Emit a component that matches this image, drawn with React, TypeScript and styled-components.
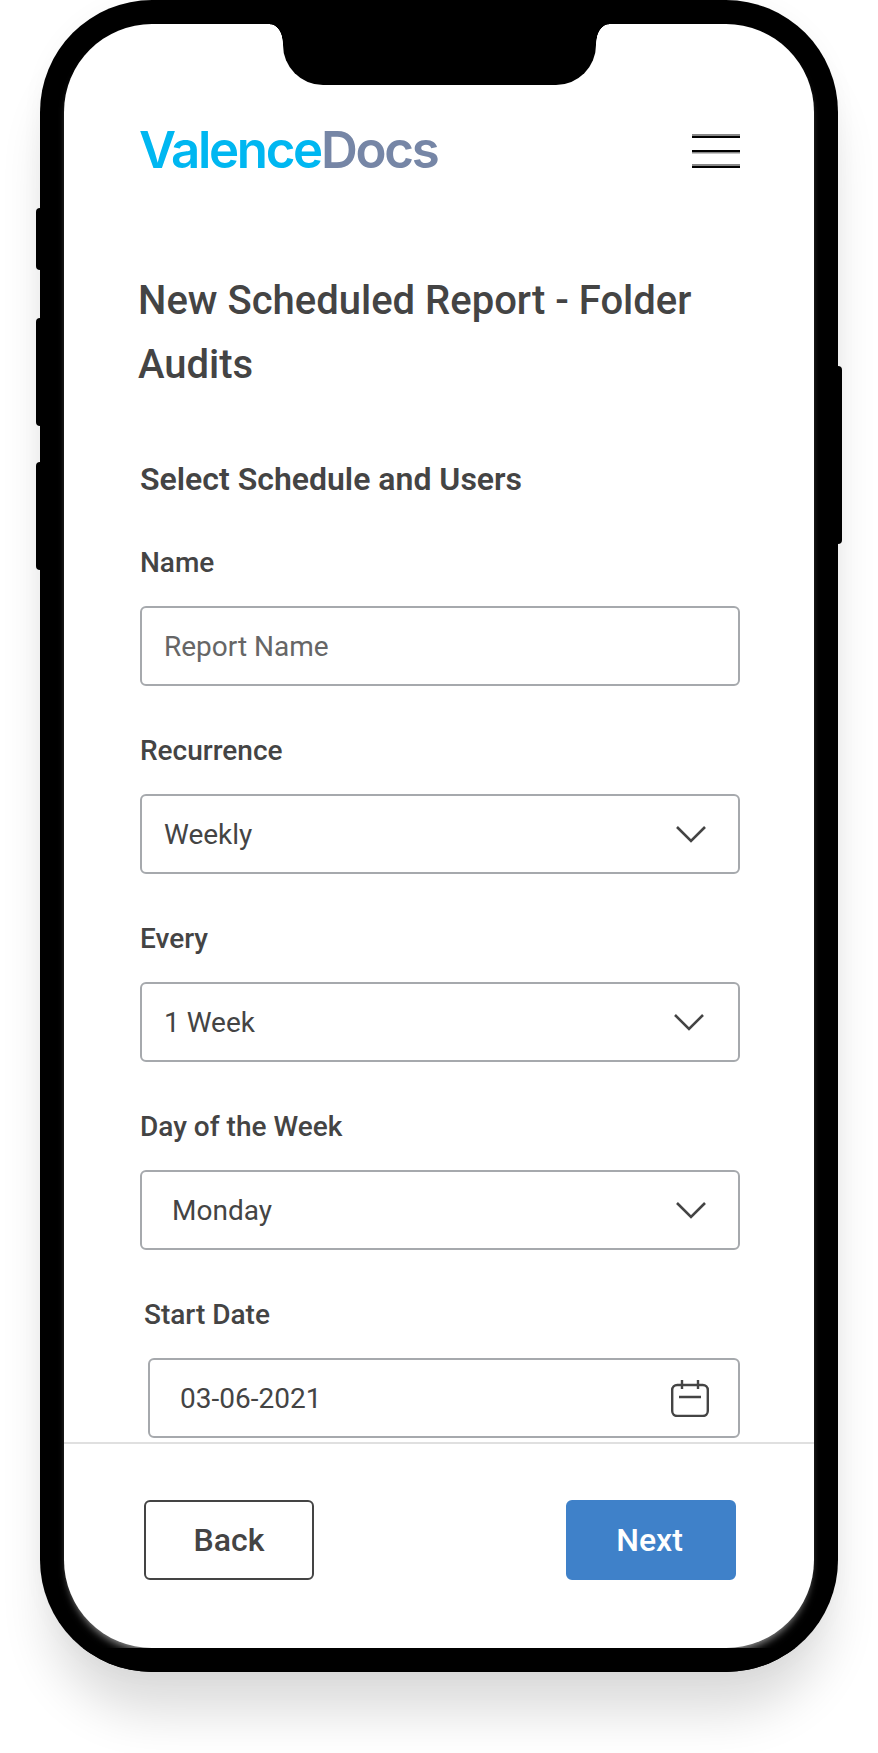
import styled, { createGlobalStyle } from 'styled-components';

const GlobalStyle = createGlobalStyle`
  html, body {
    margin: 0;
    padding: 0;
    background: #fff;
  }
  body {
    font-family: Roboto, "Liberation Sans", sans-serif;
  }
`;

const Page = styled.div`
  width: 878px;
  height: 1753px;
  padding-left: 40px;
  box-sizing: border-box;
  overflow: hidden;
`;

const Phone = styled.div`
  position: relative;
  width: 798px;
  height: 1672px;
  box-sizing: border-box;
  padding: 24px;
  background: #000;
  border-radius: 112px;
  box-shadow: 0 50px 50px -10px rgba(0, 0, 0, 0.14), 0 0 24px rgba(0, 0, 0, 0.03);

  /* keeps the flat bottom edge crisp, the glow only shows in the corners */
  &::after {
    content: '';
    position: absolute;
    inset: 0;
    background: #000;
    border-radius: 112px;
    clip-path: inset(1648px 0 0 0);
    pointer-events: none;
  }
`;

const SideButton = styled.div<{ $side: 'left' | 'right'; $top: number; $height: number }>`
  position: absolute;
  ${(p) => (p.$side === 'left' ? 'left: -4px;' : 'right: -4px;')}
  top: ${(p) => p.$top}px;
  width: 8px;
  height: ${(p) => p.$height}px;
  background: #000;
  border-radius: 4px;
`;

const Notch = styled.div`
  position: absolute;
  top: 24px;
  left: 243px;
  width: 313px;
  height: 61px;
  background: #000;
  border-radius: 0 0 40px 40px;

  &::before,
  &::after {
    content: '';
    position: absolute;
    top: 0;
    width: 13px;
    height: 19px;
    background: #000;
  }
  &::before {
    left: -13px;
    -webkit-mask: radial-gradient(13px 19px at 0 100%, transparent 96%, #000 100%);
    mask: radial-gradient(13px 19px at 0 100%, transparent 96%, #000 100%);
  }
  &::after {
    right: -13px;
    -webkit-mask: radial-gradient(13px 19px at 100% 100%, transparent 96%, #000 100%);
    mask: radial-gradient(13px 19px at 100% 100%, transparent 96%, #000 100%);
  }
`;

const Screen = styled.div`
  display: flex;
  flex-direction: column;
  height: 100%;
  background: #fff;
  border-radius: 88px;
  overflow: hidden;
  box-shadow: 0 7px 8px -4px rgba(255, 255, 255, 0.6);
`;

const Body = styled.div`
  flex: 1;
  min-height: 0;
  overflow: hidden;
  padding: 0 74px 0 76px;
`;

const Header = styled.header`
  display: flex;
  justify-content: space-between;
  align-items: flex-start;
  padding-top: 100px;
  height: 245px;
  box-sizing: border-box;
`;

const Logo = styled.div`
  margin-left: -1px;
  font-family: Inter, "Liberation Sans", sans-serif;
  font-size: 51px;
  font-weight: 600;
  line-height: 52px;
  letter-spacing: -2.3px;
  color: #00b7f1;
`;

const LogoDocs = styled.span`
  color: #7686a6;
`;

const MenuIcon = styled.svg`
  display: block;
  margin-top: 10px;
`;

const Title = styled.h1`
  margin: 0 0 0 -2px;
  font-size: 40px;
  line-height: 64px;
  font-weight: 500;
  color: #444;
`;

const Subtitle = styled.h2`
  margin: 63px 0 0;
  font-size: 32px;
  line-height: 38px;
  font-weight: 600;
  color: #444;
`;

const Field = styled.div<{ $indent?: number }>`
  margin-top: 47px;
  padding-left: ${(p) => p.$indent ?? 0}px;
`;

const Label = styled.label`
  display: block;
  font-size: 28px;
  line-height: 36px;
  font-weight: 500;
  color: #444;
`;

const Box = styled.div<{ $pad: number; $indent?: number }>`
  display: flex;
  align-items: center;
  justify-content: space-between;
  box-sizing: border-box;
  height: 80px;
  margin: 25px 0 0 ${(p) => p.$indent ?? 0}px;
  padding: 0 ${(p) => p.$pad}px 0 22px;
  border: 2px solid #a6a9ad;
  border-radius: 6px;
`;

const Value = styled.span<{ $muted?: boolean; $offset?: number }>`
  padding-left: ${(p) => p.$offset ?? 0}px;
  font-size: 28px;
  color: ${(p) => (p.$muted ? '#666' : '#444')};
`;

const Footer = styled.footer`
  display: flex;
  justify-content: space-between;
  flex: none;
  height: 206px;
  box-sizing: border-box;
  padding: 56px 78px 0 80px;
  border-top: 2px solid #e0e0e0;
`;

const Button = styled.button<{ $primary?: boolean }>`
  width: 170px;
  height: 80px;
  padding: 0 ${(p) => (p.$primary ? 3 : 0)}px 0 0;
  box-sizing: border-box;
  border-radius: 6px;
  border: 2px solid ${(p) => (p.$primary ? '#3f81c9' : '#444')};
  background: ${(p) => (p.$primary ? '#3f81c9' : '#fff')};
  color: ${(p) => (p.$primary ? '#fff' : '#444')};
  font-family: Roboto, sans-serif;
  font-size: 32px;
  font-weight: 500;
`;

const Chevron = () => (
  <svg width="30" height="18" viewBox="0 0 30 18" fill="none">
    <path d="M1 2 L15 16 L29 2" stroke="#444" strokeWidth="2.6" />
  </svg>
);

const CalendarIcon = () => (
  <svg width="38" height="37" viewBox="0 0 38 37" fill="none" stroke="#444" strokeWidth="2.4">
    <rect x="1.2" y="5" width="35.6" height="31" rx="5" />
    <path d="M11 0v9M27 0v9M8 17h22" />
  </svg>
);

const App = () => {
  return (
    <Page>
      <GlobalStyle />
      <Phone>
        <SideButton $side="left" $top={208} $height={62} />
        <SideButton $side="left" $top={318} $height={108} />
        <SideButton $side="left" $top={462} $height={108} />
        <SideButton $side="right" $top={366} $height={178} />
        <Screen>
          <Body>
            <Header>
              <Logo>
                Valence<LogoDocs>Docs</LogoDocs>
              </Logo>
              <MenuIcon width="48" height="34" viewBox="0 0 48 34">
                <rect y="0" width="48" height="2" fill="#888" />
                <rect y="2" width="48" height="2" fill="#000" />
                <rect y="16" width="48" height="2" fill="#000" />
                <rect y="18" width="48" height="1.5" fill="#888" />
                <rect y="30" width="48" height="2" fill="#888" />
                <rect y="32" width="48" height="2" fill="#000" />
              </MenuIcon>
            </Header>
            <Title>New Scheduled Report - Folder Audits</Title>
            <Subtitle>Select Schedule and Users</Subtitle>
            <Field>
              <Label>Name</Label>
              <Box $pad={32}>
                <Value $muted>Report Name</Value>
              </Box>
            </Field>
            <Field>
              <Label>Recurrence</Label>
              <Box $pad={32}>
                <Value>Weekly</Value>
                <Chevron />
              </Box>
            </Field>
            <Field>
              <Label>Every</Label>
              <Box $pad={34}>
                <Value>1 Week</Value>
                <Chevron />
              </Box>
            </Field>
            <Field>
              <Label>Day of the Week</Label>
              <Box $pad={32}>
                <Value $offset={8}>Monday</Value>
                <Chevron />
              </Box>
            </Field>
            <Field $indent={4}>
              <Label>Start Date</Label>
              <Box $pad={29} $indent={4}>
                <Value $offset={8}>03-06-2021</Value>
                <CalendarIcon />
              </Box>
            </Field>
          </Body>
          <Footer>
            <Button>Back</Button>
            <Button $primary>Next</Button>
          </Footer>
        </Screen>
        <Notch />
      </Phone>
    </Page>
  );
};

export default App;
